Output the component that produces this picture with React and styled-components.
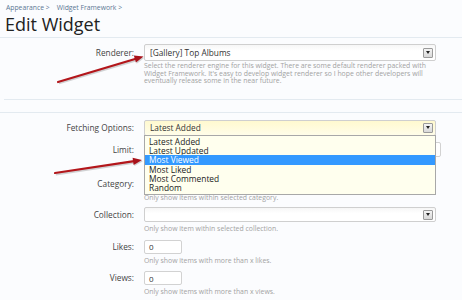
import React from "react";
import styled, { createGlobalStyle } from "styled-components";

const Global = createGlobalStyle`
  html, body { margin: 0; padding: 0; background: #fbfcfe; }
  body { font-family: "Open Sans", "DejaVu Sans", sans-serif; color: #444; }
`;

const Page = styled.div`
  position: relative;
  width: 462px;
  height: 300px;
  overflow: hidden;
  background: #fbfcfe;
`;

const Breadcrumb = styled.div`
  padding: 3px 0 0 6px;
  font-size: 6.8px;
  line-height: 10px;
  color: #5b7894;
  display: flex;
  gap: 7px;
`;

const Title = styled.h1`
  margin: 0;
  padding-left: 5px;
  font-size: 18px;
  line-height: 22px;
  font-weight: normal;
  color: #222;
`;

const Rule = styled.div`
  height: 1px;
  background: #e3eaf0;
  margin-top: ${(p) => p.$mt || 0}px;
  margin-left: ${(p) => p.$ml || 0}px;
`;

const Row = styled.div`
  display: grid;
  grid-template-columns: 134px 1fr;
  column-gap: 10px;
  margin-top: ${(p) => p.$mt || 0}px;
  position: relative;
`;

const Label = styled.div`
  text-align: right;
  font-size: 8.3px;
  line-height: ${(p) => p.$h || 15}px;
  color: #444;
  white-space: nowrap;
`;

const Control = styled.div`
  position: relative;
`;

const SelectBox = styled.div`
  box-sizing: border-box;
  width: 292px;
  height: ${(p) => p.$h || 15}px;
  border: 1px solid #cfcfcf;
  border-radius: 2px;
  background: ${(p) =>
    p.$focus
      ? "linear-gradient(#fff9cf, #fffde9)"
      : "linear-gradient(#f6f6f6, #ffffff 40%)"};
  display: flex;
  align-items: center;
  padding-left: 5px;
  font-size: 8.3px;
  color: #333;
`;

const SelectText = styled.span`
  flex: 1;
`;

const ArrowBtn = styled.span`
  box-sizing: border-box;
  width: 10px;
  height: 10px;
  margin-right: 2px;
  border: 1px solid #9a9a9a;
  border-radius: 1px;
  background: linear-gradient(#f4f4f4, #d8d8d8);
  display: flex;
  align-items: center;
  justify-content: center;
  &::after {
    content: "";
    border-left: 2.5px solid transparent;
    border-right: 2.5px solid transparent;
    border-top: 3px solid #222;
  }
`;

const TextInput = styled.div`
  box-sizing: border-box;
  width: ${(p) => p.$w}px;
  height: ${(p) => p.$h || 14}px;
  border: 1px solid #d2d2d2;
  border-radius: 2px;
  background: #fff;
  font-size: 8px;
  color: #333;
  display: flex;
  align-items: center;
  padding-left: 4px;
`;

const Help = styled.div`
  grid-column: 2;
  margin-top: ${(p) => p.$mt || 0}px;
  font-size: 6.9px;
  line-height: 7.5px;
  color: #a2a2a2;
  white-space: nowrap;
`;

const List = styled.ul`
  position: absolute;
  top: 15px;
  left: 0;
  z-index: 2;
  box-sizing: border-box;
  width: 292px;
  margin: 0;
  padding: 1px 0 1px;
  list-style: none;
  background: #ffffee;
  border: 1px solid #a8a8a8;
  font-size: 8.4px;
  color: #222;
`;

const Item = styled.li`
  height: 9.4px;
  line-height: 9.4px;
  padding-left: 4px;
  overflow: hidden;
  background: ${(p) => (p.$active ? "#3399ff" : "transparent")};
  color: ${(p) => (p.$active ? "#fff" : "#222")};
`;

const Overlay = styled.svg`
  position: absolute;
  left: 0;
  top: 0;
  pointer-events: none;
  z-index: 5;
`;

function Arrow({ x1, y1, x2, y2 }) {
  const dx = x2 - x1;
  const dy = y2 - y1;
  const len = Math.hypot(dx, dy);
  const ux = dx / len;
  const uy = dy / len;
  const hl = 9;
  const hw = 3.6;
  const bx = x2 - ux * hl;
  const by = y2 - uy * hl;
  const px = -uy * hw;
  const py = ux * hw;
  const pts = `${x2},${y2} ${bx + px},${by + py} ${bx - px},${by - py}`;
  return (
    <g>
      <g transform="translate(0.8,1.2)" opacity="0.25">
        <line x1={x1} y1={y1} x2={bx} y2={by} stroke="#555" strokeWidth="2.4" />
        <polygon points={pts} fill="#555" />
      </g>
      <line x1={x1} y1={y1} x2={bx + ux} y2={by + uy} stroke="#b3161b" strokeWidth="2.2" strokeLinecap="round" />
      <polygon points={pts} fill="#a8121a" />
    </g>
  );
}

const options = [
  "Latest Added",
  "Latest Updated",
  "Most Viewed",
  "Most Liked",
  "Most Commented",
  "Random",
];

export default function App() {
  return (
    <Page>
      <Global />
      <Breadcrumb>
        <span>Appearance &gt;</span>
        <span>Widget Framework &gt;</span>
      </Breadcrumb>
      <Title>Edit Widget</Title>
      <Rule $mt={2} />

      <Row $mt={6}>
        <Label $h={17}>Renderer:</Label>
        <Control>
          <SelectBox $h={17}>
            <SelectText>[Gallery] Top Albums</SelectText>
            <ArrowBtn />
          </SelectBox>
        </Control>
        <Help $mt={1}>
          Select the renderer engine for this widget. There are some default renderer packed with
          <br />
          Widget Framework. It's easy to develop widget renderer so I hope other developers will
          <br />
          eventually release some in the near future.
        </Help>
      </Row>

      <Rule $mt={14} $ml={4} />
      <Rule $mt={12} />

      <Row $mt={7}>
        <Label $h={16}>Fetching Options:</Label>
        <Control>
          <SelectBox $h={16} $focus>
            <SelectText>Latest Added</SelectText>
            <ArrowBtn />
          </SelectBox>
          <List>
            {options.map((o) => (
              <Item key={o} $active={o === "Most Viewed"}>
                {o}
              </Item>
            ))}
          </List>
        </Control>
      </Row>

      <Row $mt={6}>
        <Label $h={15}>Limit:</Label>
        <Control>
          <TextInput $w={297} $h={15} />
        </Control>
      </Row>

      <Row $mt={19}>
        <Label $h={15}>Category:</Label>
        <Control>
          <SelectBox $h={15}>
            <SelectText />
            <ArrowBtn />
          </SelectBox>
        </Control>
        <Help $mt={3}>Only show items within selected category.</Help>
      </Row>

      <Row $mt={6}>
        <Label $h={15}>Collection:</Label>
        <Control>
          <SelectBox $h={15}>
            <SelectText />
            <ArrowBtn />
          </SelectBox>
        </Control>
        <Help $mt={3}>Only show item within selected collection.</Help>
      </Row>

      <Row $mt={7}>
        <Label $h={14}>Likes:</Label>
        <Control>
          <TextInput $w={38}>0</TextInput>
        </Control>
        <Help $mt={3}>Only show items with more than x likes.</Help>
      </Row>

      <Row $mt={7}>
        <Label $h={14}>Views:</Label>
        <Control>
          <TextInput $w={38}>0</TextInput>
        </Control>
        <Help $mt={3}>Only show items with more than x views.</Help>
      </Row>

      <Overlay width="462" height="300" viewBox="0 0 462 300">
        <Arrow x1={58} y1={82} x2={143.5} y2={56.5} />
        <Arrow x1={55} y1={173} x2={142} y2={160} />
      </Overlay>
    </Page>
  );
}
